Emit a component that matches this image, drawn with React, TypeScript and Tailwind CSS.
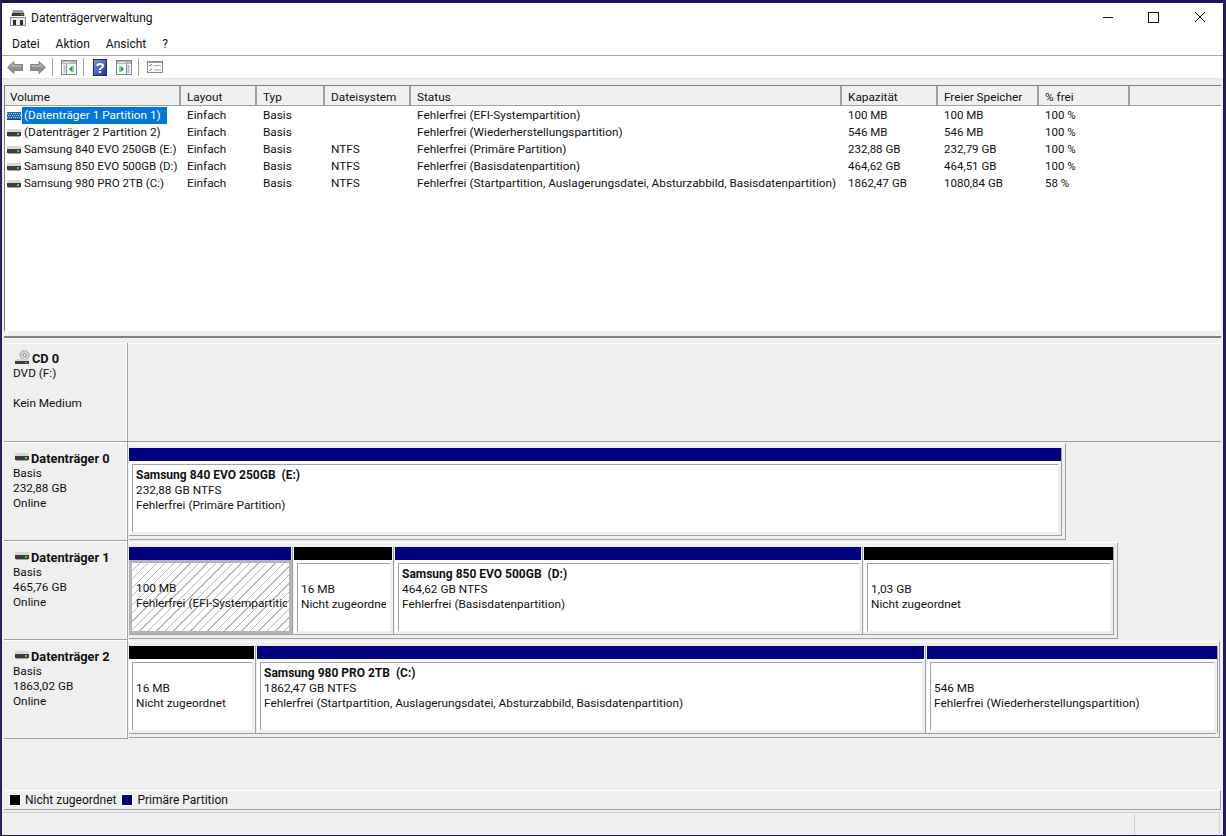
import React from 'react';

const FONT = 'font-["Roboto",sans-serif]';

interface PartitionProps {
  width: number;
  color: 'navy' | 'black';
  name?: string;
  lines: string[];
  selected?: boolean;
  last?: boolean;
}

interface DiskProps {
  title: string;
  info: string[];
  frameWidth: number;
  parts: PartitionProps[];
}

const volumes = [
  ['(Datenträger 1 Partition 1)', 'Einfach', 'Basis', '', 'Fehlerfrei (EFI-Systempartition)', '100 MB', '100 MB', '100 %'],
  ['(Datenträger 2 Partition 2)', 'Einfach', 'Basis', '', 'Fehlerfrei (Wiederherstellungspartition)', '546 MB', '546 MB', '100 %'],
  ['Samsung 840 EVO 250GB (E:)', 'Einfach', 'Basis', 'NTFS', 'Fehlerfrei (Primäre Partition)', '232,88 GB', '232,79 GB', '100 %'],
  ['Samsung 850 EVO 500GB (D:)', 'Einfach', 'Basis', 'NTFS', 'Fehlerfrei (Basisdatenpartition)', '464,62 GB', '464,51 GB', '100 %'],
  ['Samsung 980 PRO 2TB (C:)', 'Einfach', 'Basis', 'NTFS', 'Fehlerfrei (Startpartition, Auslagerungsdatei, Absturzabbild, Basisdatenpartition)', '1862,47 GB', '1080,84 GB', '58 %'],
];

const columns = [
  { label: 'Volume', width: 176 },
  { label: 'Layout', width: 76 },
  { label: 'Typ', width: 68 },
  { label: 'Dateisystem', width: 86 },
  { label: 'Status', width: 431 },
  { label: 'Kapazität', width: 96 },
  { label: 'Freier Speicher', width: 101 },
  { label: '% frei', width: 91 },
];

const disks: DiskProps[] = [
  {
    title: 'Datenträger 0',
    info: ['Basis', '232,88 GB', 'Online'],
    frameWidth: 937,
    parts: [
      { width: 933, color: 'navy', name: 'Samsung 840 EVO 250GB  (E:)', lines: ['232,88 GB NTFS', 'Fehlerfrei (Primäre Partition)'], last: true },
    ],
  },
  {
    title: 'Datenträger 1',
    info: ['Basis', '465,76 GB', 'Online'],
    frameWidth: 989,
    parts: [
      { width: 165, color: 'navy', lines: ['100 MB', 'Fehlerfrei (EFI-Systempartition)'], selected: true },
      { width: 101, color: 'black', lines: ['16 MB', 'Nicht zugeordnet'] },
      { width: 469, color: 'navy', name: 'Samsung 850 EVO 500GB  (D:)', lines: ['464,62 GB NTFS', 'Fehlerfrei (Basisdatenpartition)'] },
      { width: 250, color: 'black', lines: ['1,03 GB', 'Nicht zugeordnet'], last: true },
    ],
  },
  {
    title: 'Datenträger 2',
    info: ['Basis', '1863,02 GB', 'Online'],
    frameWidth: 1091,
    parts: [
      { width: 128, color: 'black', lines: ['16 MB', 'Nicht zugeordnet'] },
      { width: 670, color: 'navy', name: 'Samsung 980 PRO 2TB  (C:)', lines: ['1862,47 GB NTFS', 'Fehlerfrei (Startpartition, Auslagerungsdatei, Absturzabbild, Basisdatenpartition)'] },
      { width: 291, color: 'navy', lines: ['546 MB', 'Fehlerfrei (Wiederherstellungspartition)'], last: true },
    ],
  },
];

function DriveIcon({ hatched = false }: { hatched?: boolean }) {
  if (hatched) {
    return (
      <svg width="14" height="8" viewBox="0 0 14 8" className="shrink-0">
        <rect x="0" y="0" width="14" height="8" fill="#1f66b8" />
        <path d="M0 1.5h14M1 3.5h13M0 5.5h14" stroke="#a6d0f2" strokeDasharray="1 1" />
        <rect x="0" y="7" width="14" height="1" fill="#16447e" />
      </svg>
    );
  }
  return (
    <svg width="14" height="8" viewBox="0 0 14 8" className="shrink-0">
      <rect x="0" y="0" width="14" height="3" rx="1" fill="#d8d8d8" />
      <rect x="0" y="3" width="14" height="4" fill="#3c3c3c" />
      <rect x="10" y="4" width="2" height="2" fill="#3fd45a" />
      <rect x="1" y="7" width="12" height="1" fill="#a4a4a4" />
    </svg>
  );
}

function CdIcon() {
  return (
    <svg width="15" height="15" viewBox="0 0 15 15" className="mb-[3px] shrink-0">
      <circle cx="9.5" cy="5" r="4.5" fill="#d4d4d4" stroke="#a4a4a4" />
      <circle cx="9.5" cy="5" r="1.5" fill="#fff" stroke="#8a8a8a" />
      <rect x="0" y="9" width="14" height="2" fill="#d8d8d8" />
      <rect x="0" y="11" width="14" height="3" fill="#3c3c3c" />
      <rect x="10" y="12" width="2" height="1" fill="#3fd45a" />
    </svg>
  );
}

function AppIcon() {
  return (
    <svg width="16" height="16" viewBox="0 0 16 16">
      <path d="M3 0h10l2 6H1z" fill="#a0a0a0" />
      <rect x="2" y="3" width="12" height="3" fill="#3a3a3a" />
      <rect x="11" y="4" width="2" height="1" fill="#3fd45a" />
      <rect x=".5" y="7.5" width="15" height="8" fill="#ececec" stroke="#8a8a8a" />
      <rect x="3" y="10" width="3" height="5" fill="#2c2c2c" />
      <rect x="10" y="10" width="3" height="5" fill="#2c2c2c" />
    </svg>
  );
}

function ArrowIcon({ flip = false }: { flip?: boolean }) {
  return (
    <svg width="16" height="13" viewBox="0 0 16 13" className={flip ? 'scale-x-[-1]' : ''}>
      <path d="M.5 6.5 7 .5v3h8.5v6H7v3z" fill="#8f8f8f" stroke="#848484" />
      <path d="M2.5 6.5 6 3.5v1.5h8.5" fill="none" stroke="#c8c8c8" />
    </svg>
  );
}

function PaneIcon({ side }: { side: 'left' | 'right' }) {
  return (
    <svg width="16" height="15" viewBox="0 0 16 15">
      <rect x=".5" y=".5" width="15" height="14" fill="#f4f6f8" stroke="#7d8790" />
      <rect x="1" y="1" width="14" height="3" fill="#aeb6be" />
      <path d="M2 2.5h7" stroke="#e8ecf0" />
      {side === 'left' ? (
        <>
          <path d="M5.5 4v10" stroke="#8a949e" />
          <path d="M2.5 6h2M2.5 8h2M2.5 10h2M2.5 12h2" stroke="#7d9ab4" />
          <path d="M11 6v6L8 9z" fill="#18a838" />
          <path d="M12 6v6" stroke="#18a838" />
        </>
      ) : (
        <>
          <path d="M10.5 4v10" stroke="#8a949e" />
          <path d="M11.5 6h2M11.5 8h2M11.5 10h2M11.5 12h2" stroke="#5d88ac" />
          <path d="M5 6v6l3-3z" fill="#18a838" />
          <path d="M4 6v6" stroke="#18a838" />
        </>
      )}
    </svg>
  );
}

function HelpIcon() {
  return (
    <svg width="14" height="17" viewBox="0 0 14 17">
      <defs>
        <linearGradient id="helpFill" x1="0" y1="0" x2="1" y2="1">
          <stop offset="0" stopColor="#8296e6" />
          <stop offset="1" stopColor="#1c2f96" />
        </linearGradient>
      </defs>
      <rect x=".5" y=".5" width="13" height="16" fill="url(#helpFill)" stroke="#1a2878" />
      <text x="7" y="14" fontSize="15" fontWeight="700" fontFamily="Liberation Sans" fill="#fff" textAnchor="middle">?</text>
    </svg>
  );
}

function ListIcon() {
  return (
    <svg width="16" height="12" viewBox="0 0 16 12">
      <rect x=".5" y=".5" width="15" height="11" fill="#fff" stroke="#8a8a8a" />
      <rect x="1" y="1" width="14" height="1" fill="#a0a0a0" />
      <path d="M2 4l1 1 2-2M2 8.5l1 1 2-2" fill="none" stroke="#3c80c8" />
      <path d="M7 4.5h7M7 9h7" stroke="#a8a8a8" />
    </svg>
  );
}

function ToolSep() {
  return <div className="h-[18px] w-px bg-[#a0a0a0]" />;
}

function Partition({ width, color, name, lines, selected, last }: PartitionProps) {
  const barColor = color === 'navy' ? 'bg-[#000080]' : 'bg-black';
  return (
    <div className={`flex shrink-0 flex-col border-r border-[#a0a0a0] ${last ? '' : 'mr-px'}`} style={{ width: last ? width : width - 1 }}>
      <div className={`h-[13px] shrink-0 ${last ? '' : 'mr-px'} ${barColor}`} />
      {selected ? (
        <div className="min-h-0 flex-1 border-[3px] border-[#b4b4b4] bg-[repeating-linear-gradient(135deg,#fff_0_5px,#b8b8b8_5px_6px)] pl-[4px] pr-[2px] pt-[3px]">
          <div className="overflow-hidden whitespace-nowrap">
            <div className="h-[15px]" />
            {lines.map((line) => (
              <div key={line} className="h-[15px] text-[11.8px] leading-[15px]">{line}</div>
            ))}
          </div>
        </div>
      ) : (
        <div className="flex min-h-0 flex-1 border-t-[3px] border-r-[3px] border-b-[3px] border-l-[3px] border-t-white border-r-[#efefef] border-b-[#efefef] border-l-white bg-white">
          <div className="min-w-0 flex-1 border-t border-l border-[#a0a0a0] pl-[3px] pr-[4px] pt-[3px]">
            <div className="overflow-hidden whitespace-pre">
              <div className="h-[15px] font-bold leading-[15px]">{name}</div>
              {lines.map((line) => (
                <div key={line} className="h-[15px] text-[11.8px] leading-[15px]">{line}</div>
              ))}
            </div>
          </div>
        </div>
      )}
    </div>
  );
}

function LabelCell({ icon, title, info, top }: { icon: React.ReactNode; title: string; info: string[]; top: string }) {
  return (
    <div className={`flex w-[124px] shrink-0 flex-col border-r border-b border-r-[#a0a0a0] border-b-[#a0a0a0] pl-[9px] shadow-[inset_-1px_1px_0_#fff] ${top}`}>
      <div className="flex h-[15px] items-center gap-[2px] pl-[2px] text-[12.8px] font-bold leading-[15px]">
        {icon}
        <span>{title}</span>
      </div>
      {info.map((line, i) => (
        <div key={i} className="h-[15px] text-[11.8px] leading-[15px]">{line}</div>
      ))}
    </div>
  );
}

function DiskRow({ title, info, frameWidth, parts }: DiskProps) {
  return (
    <div className="flex h-[99px] shrink-0">
      <LabelCell icon={<div className="mb-[3px] flex"><DriveIcon /></div>} title={title} info={info} top="pt-[9px]" />
      <div className="pl-px pt-px">
        <div className="flex h-[97px] flex-col border-t border-r border-b border-t-white border-r-[#a0a0a0] border-b-[#a0a0a0] pt-[4px] pr-[3px] pb-[3px]" style={{ width: frameWidth }}>
          <div className="flex min-h-0 flex-1 border-b border-[#a0a0a0]">
            {parts.map((part, i) => (
              <Partition key={i} {...part} />
            ))}
          </div>
        </div>
      </div>
    </div>
  );
}

export default function App() {
  return (
    <div className={`h-[836px] w-[1226px] overflow-hidden bg-[linear-gradient(90deg,#3a2a5c_0,#1b1550_2px,#1b1550_1222px,#2a1a60_100%)] pt-[3px] pr-[3px] pb-px pl-[2px] text-[12px] text-[#111] ${FONT}`}>
      <div className="flex h-full flex-col bg-[#efefef]">
        {/* title bar */}
        <div className="flex h-[30px] shrink-0 items-center bg-white">
          <div className="ml-[8px] mt-[-1px] flex"><AppIcon /></div>
          <span className="ml-[5px] mt-[-1px]">Datenträgerverwaltung</span>
          <div className="ml-auto flex items-center">
            <svg width="46" height="30" viewBox="0 0 46 30"><path d="M18 14.5h10" stroke="#111" /></svg>
            <svg width="46" height="30" viewBox="0 0 46 30"><rect x="17.5" y="9.5" width="10" height="10" fill="none" stroke="#111" /></svg>
            <svg width="46" height="30" viewBox="0 0 46 30"><path d="M18 9l10 10M28 9 18 19" stroke="#111" /></svg>
          </div>
        </div>
        {/* menu */}
        <div className="flex h-[23px] shrink-0 items-center gap-[16px] border-b border-[#a8a8a8] bg-white pl-[10px]">
          <span>Datei</span>
          <span>Aktion</span>
          <span>Ansicht</span>
          <span>?</span>
        </div>
        {/* toolbar */}
        <div className="flex h-[23px] shrink-0 items-center border-b border-[#e4e4e4] bg-white pl-[5px]">
          <ArrowIcon />
          <div className="ml-[7px] flex"><ArrowIcon flip /></div>
          <div className="ml-[6px]"><ToolSep /></div>
          <div className="ml-[8px] flex"><PaneIcon side="left" /></div>
          <div className="ml-[6px]"><ToolSep /></div>
          <div className="ml-[9px] flex"><HelpIcon /></div>
          <div className="ml-[9px] flex"><PaneIcon side="right" /></div>
          <div className="ml-[6px]"><ToolSep /></div>
          <div className="ml-[8px] flex"><ListIcon /></div>
        </div>
        <div className="h-[6px] shrink-0" />
        {/* volume list */}
        <div className="mx-[2px] flex h-[246px] shrink-0 flex-col border-t border-l border-[#808080] bg-white">
          <div className="flex h-[20px] shrink-0 border-b border-[#a0a0a0] bg-[#f0f0f0]">
            {columns.map((col, i) => (
              <div key={col.label} className={`flex shrink-0 items-center border-r-2 border-[#a0a0a0] text-[11.8px] ${i === 0 ? 'pl-[5px]' : 'pl-[6px]'}`} style={{ width: col.width }}>
                <span className="mt-[5px]">{col.label}</span>
              </div>
            ))}
          </div>
          <div className="pt-px">
            {volumes.map((row, r) => (
              <div key={r} className="flex h-[17px] items-center whitespace-nowrap">
                {row.map((cell, c) => (
                  <div key={c} className={`flex h-[17px] shrink-0 items-center ${(c === 0 && r > 1) || c >= 5 ? 'text-[11.5px]' : 'text-[11.8px]'} ${c === 0 ? 'pl-[2px]' : 'pl-[6px]'}`} style={{ width: columns[c].width }}>
                    {c === 0 ? (
                      <>
                        <DriveIcon hatched={r === 0} />
                        <span className={`ml-px pl-[2px] pr-[6px] leading-[17px] ${r === 0 ? 'bg-[#0078d7] text-white' : ''}`}>{cell}</span>
                      </>
                    ) : (
                      cell
                    )}
                  </div>
                ))}
              </div>
            ))}
          </div>
        </div>
        {/* splitter */}
        <div className="h-[5px] shrink-0" />
        <div className="mx-[2px] h-[2px] shrink-0 bg-[#808080]" />
        <div className="h-[5px] shrink-0" />
        {/* graphical view */}
        <div className="mx-[2px] flex min-h-0 flex-1 flex-col">
          <div className="flex h-[99px] shrink-0">
            <LabelCell icon={<CdIcon />} title="CD 0" info={['DVD (F:)', '', 'Kein Medium']} top="pt-[8px]" />
            <div className="flex-1 border-t border-b border-t-white border-b-[#a0a0a0]" />
          </div>
          {disks.map((disk) => (
            <DiskRow key={disk.title} {...disk} />
          ))}
          <div className="flex-1" />
          {/* legend */}
          <div className="flex h-[20px] shrink-0 items-center border-t border-r border-b border-t-white border-r-[#a0a0a0] border-b-[#a0a0a0] pl-[5px]">
            <div className="h-[12px] w-[12px] border border-white bg-black" />
            <span className="ml-[4px]">Nicht zugeordnet</span>
            <div className="ml-[5px] h-[12px] w-[12px] border border-white bg-[#000080]" />
            <span className="ml-[4px]">Primäre Partition</span>
          </div>
        </div>
        <div className="mt-[2px] flex h-[23px] shrink-0 border-t border-[#cfcfcf] pt-px">
          <div className="w-[1133px] border-r border-[#cfcfcf]" />
          <div className="w-[85px] border-r border-[#cfcfcf]" />
        </div>
      </div>
    </div>
  );
}
